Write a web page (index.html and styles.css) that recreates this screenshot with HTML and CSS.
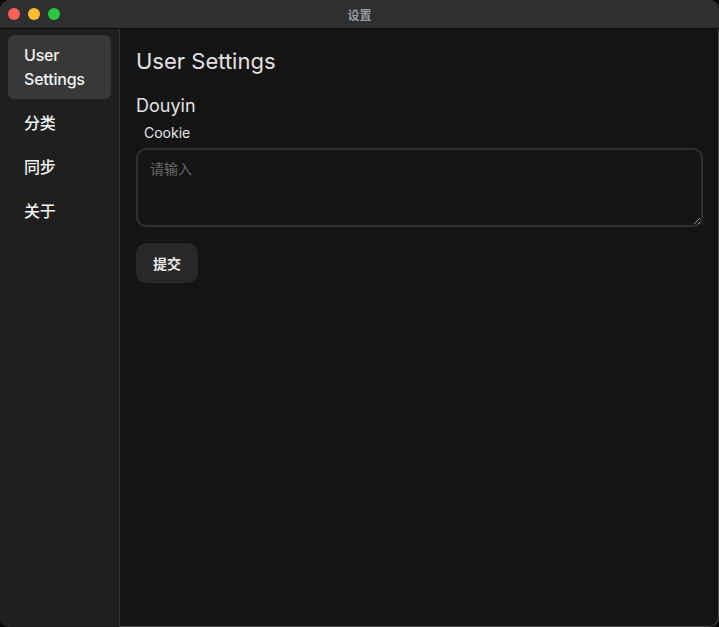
FILE: index.html
```html
<!DOCTYPE html>
<html lang="zh">
<head>
<meta charset="utf-8">
<title>设置</title>
<link rel="stylesheet" href="styles.css">
</head>
<body>
<div class="window">
  <header class="titlebar">
    <div class="lights">
      <span class="light red"></span>
      <span class="light yellow"></span>
      <span class="light green"></span>
    </div>
    <div class="title">设置</div>
  </header>
  <div class="body">
    <nav class="sidebar">
      <a class="nav-item active">User Settings</a>
      <a class="nav-item">分类</a>
      <a class="nav-item">同步</a>
      <a class="nav-item">关于</a>
    </nav>
    <main class="content">
      <h1 class="page-title">User Settings</h1>
      <h2 class="section-title">Douyin</h2>
      <label class="field-label" for="cookie">Cookie</label>
      <textarea id="cookie" class="textarea" placeholder="请输入"></textarea>
      <button class="submit">提交</button>
    </main>
  </div>
</div>
</body>
</html>
```
FILE: styles.css
```css
* { box-sizing: border-box; }
html, body { margin: 0; height: 100%; background: #0b0b0b; }
body {
  font-family: Inter, "Noto Sans CJK SC", sans-serif;
  color: #e6e6e6;
}
.window {
  height: 627px;
  width: 719px;
  display: flex;
  flex-direction: column;
  border-radius: 10px;
  overflow: hidden;
  background: #141414;
  box-shadow: inset 0 0 0 1px #4a4a4a;
}
.titlebar {
  height: 29px;
  flex: none;
  background: #2e2f31;
  position: relative;
  display: flex;
  align-items: center;
  border-bottom: 1px solid #0a0a0a;
}
.lights { display: flex; gap: 8px; padding-left: 8px; }
.light { width: 12px; height: 12px; border-radius: 50%; display: block; }
.red { background: #fe5f57; }
.yellow { background: #febc2e; }
.green { background: #28c840; }
.title {
  position: absolute;
  left: 0; right: 0; top: 0; bottom: 0;
  display: flex; align-items: center; justify-content: center;
  font-size: 12px;
  font-weight: 700;
  color: #9b9b9d;
}
.body { flex: 1; display: flex; min-height: 0; }
.sidebar {
  width: 120px;
  flex: none;
  background: #1f1f1f;
  border-right: 1px solid #353535;
  padding: 6px 8px;
  display: flex;
  flex-direction: column;
  gap: 4px;
}
.nav-item {
  display: block;
  padding: 8px 16px;
  font-size: 16px;
  line-height: 24px;
  color: #f2f2f2;
  border-radius: 6px;
  font-weight: 500;
  letter-spacing: -0.2px;
}
.nav-item.active { background: #383838; }
.content {
  flex: 1;
  padding: 15px 16px 0 16px;
  display: flex;
  flex-direction: column;
  align-items: flex-start;
}
.page-title {
  margin: 0;
  font-size: 22px;
  font-weight: 400;
  line-height: 34px;
  color: #e2e2e2;
}
.section-title {
  margin: 15px 0 0;
  font-size: 18px;
  font-weight: 400;
  line-height: 26px;
  color: #e2e2e2;
}
.field-label {
  margin: 4px 0 0 8px;
  font-size: 14px;
  line-height: 20px;
  color: #e6e6e6;
}
.textarea {
  margin-top: 5px;
  width: 567px;
  height: 79px;
  background: #141414;
  border: 2px solid #303030;
  border-radius: 10px;
  padding: 8px 12px;
  font-family: Inter, "Noto Sans CJK SC", sans-serif;
  font-size: 14px;
  color: #e6e6e6;
  outline: none;
}
.textarea::placeholder { color: #6a6a6a; }
.submit {
  margin-top: 16px;
  height: 40px;
  padding: 0 17px;
  background: #282828;
  color: #e8e8e8;
  border: none;
  border-radius: 10px;
  font-family: Inter, "Noto Sans CJK SC", sans-serif;
  font-size: 14px;
  font-weight: 700;
}
```
